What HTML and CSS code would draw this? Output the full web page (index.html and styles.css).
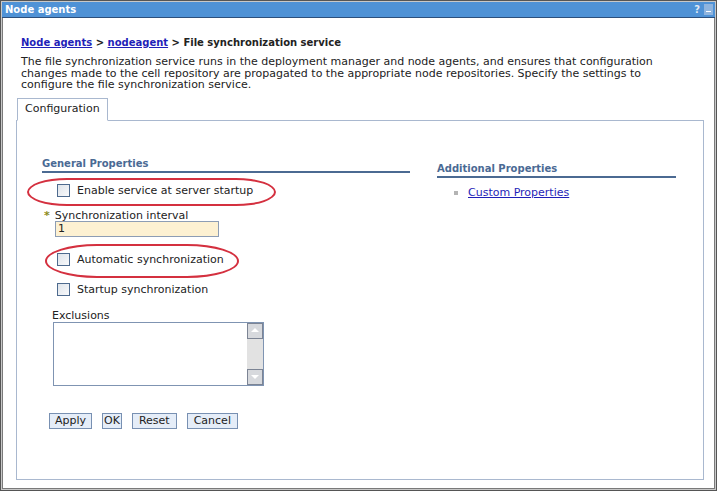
FILE: index.html
```html
<!DOCTYPE html>
<html lang="en">

<head>
    <meta charset="UTF-8">
    <title>Node agents</title>
    <link rel="stylesheet" href="styles.css">
</head>

<body>
    <div class="window">
        <div class="titlebar">
            <span class="title">Node agents</span>
            <span class="tb-icons"><span class="help">?</span><span class="minimize"></span></span>
        </div>
        <div class="page">
            <div class="crumbs"><a href="#">Node agents</a> &gt; <a href="#">nodeagent</a> &gt; File synchronization service</div>
            <p class="desc">The file synchronization service runs in the deployment manager and node agents, and ensures that configuration<br>changes made to the cell repository are propagated to the appropriate node repositories. Specify the settings to<br>configure the file synchronization service.</p>
            <div class="tabs"><span class="tab">Configuration</span></div>
            <div class="panel">
                <div class="cols">
                    <div class="col-left">
                        <h3 class="section">General Properties</h3>
                        <div class="check-row row-enable">
                            <span class="ring ring-enable"></span>
                            <span class="box"></span>
                            <span>Enable service at server startup</span>
                        </div>
                        <div class="field-label"><span class="req">*</span>Synchronization interval</div>
                        <div class="text-input">1</div>
                        <div class="check-row row-auto">
                            <span class="ring ring-auto"></span>
                            <span class="box"></span>
                            <span>Automatic synchronization</span>
                        </div>
                        <div class="check-row row-startup">
                            <span class="box"></span>
                            <span>Startup synchronization</span>
                        </div>
                        <div class="excl-label">Exclusions</div>
                        <div class="textarea">
                            <div class="scrollbar">
                                <span class="arrow up"></span>
                                <span class="arrow down"></span>
                            </div>
                        </div>
                    </div>
                    <div class="col-right">
                        <h3 class="section">Additional Properties</h3>
                        <ul class="links">
                            <li><a href="#">Custom Properties</a></li>
                        </ul>
                    </div>
                </div>
                <div class="buttons">
                    <button class="btn-apply">Apply</button>
                    <button class="btn-ok">OK</button>
                    <button>Reset</button>
                    <button>Cancel</button>
                </div>
            </div>
        </div>
    </div>
</body>

</html>
```

FILE: styles.css
```css
body {
    margin: 0;
    font-family: "DejaVu Sans", Verdana, sans-serif;
    font-size: 11px;
    color: #222;
    background: #fff;
}

.window {
    display: flex;
    flex-direction: column;
    width: 717px;
    height: 491px;
    box-sizing: border-box;
    padding: 0 2px 2px;
    border: 1px solid #555;
    box-shadow: inset 0 0 0 1px #c8c8c8, inset 0 0 0 2px #7a7a7a;
    overflow: hidden;
}

.titlebar {
    display: flex;
    align-items: center;
    justify-content: space-between;
    height: 15px;
    margin: 1px -1px 0;
    padding: 0 2px 0 3px;
    background: #4f92d6;
    border-bottom: 1px solid #2c4f7c;
}

.title {
    color: #fff;
    font-weight: bold;
    font-size: 10px;
}

.tb-icons {
    display: flex;
    align-items: center;
    gap: 4px;
}

.help {
    color: #dfe8f4;
    font-weight: bold;
    font-size: 10px;
}

.minimize {
    position: relative;
    width: 9px;
    height: 11px;
    background: #8fb4de;
}

.minimize::after {
    content: "";
    position: absolute;
    left: 2px;
    right: 2px;
    bottom: 3px;
    height: 1px;
    background: #fff;
}

.page {
    flex: 1;
    display: flex;
    flex-direction: column;
    padding: 18px 10px 8px 13px;
}

.crumbs {
    padding-left: 5px;
    font-size: 10px;
    font-weight: bold;
    line-height: 13px;
}

a {
    color: #1f1fb8;
}

.desc {
    margin: 7px 0 0;
    padding-left: 5px;
    line-height: 11.5px;
}

.tabs {
    display: flex;
    margin-top: 6px;
    padding-left: 1px;
}

.tab {
    position: relative;
    top: 1px;
    box-sizing: border-box;
    height: 23px;
    padding: 4px 7px 0 7px;
    line-height: 12px;
    border: 1px solid #a9b8cf;
    border-bottom: 1px solid #fff;
    background: #fff;
}

.panel {
    flex: 1;
    display: flex;
    flex-direction: column;
    border: 1px solid #a9b8cf;
    padding: 0 25px 0 25px;
}

.cols {
    display: grid;
    grid-template-columns: 368px 239px;
    column-gap: 27px;
    margin-top: 37px;
}

.section {
    margin: 0;
    padding-bottom: 1px;
    font-size: 10px;
    line-height: 12px;
    color: #4a6a94;
    border-bottom: 2px solid #4b6a92;
}

.col-left {
    display: flex;
    flex-direction: column;
}

.col-right {
    padding-top: 5px;
}

.check-row {
    position: relative;
    display: flex;
    align-items: center;
    gap: 7px;
    padding-left: 15px;
    height: 14px;
}

.box {
    width: 11px;
    height: 11px;
    border: 1px solid #4d6a8e;
    background: linear-gradient(135deg, #dfe4ea, #f8f9fb);
}

.row-enable {
    margin-top: 11px;
}

.row-auto {
    margin-top: 16px;
}

.row-startup {
    margin-top: 16px;
}

.ring {
    position: absolute;
    box-sizing: border-box;
    border: 2px solid #d4303f;
}

.ring-enable {
    left: -15px;
    top: -6px;
    width: 249px;
    height: 28px;
    border-radius: 40px / 14px;
}

.ring-auto {
    left: 3px;
    top: -9px;
    width: 194px;
    height: 34px;
    border-radius: 52px / 17px;
}

.field-label {
    margin-top: 12px;
    line-height: 12px;
}

.req {
    margin-right: 5px;
    margin-left: 2px;
    color: #8c8a1a;
    font-weight: bold;
}

.text-input {
    box-sizing: border-box;
    width: 164px;
    height: 16px;
    margin: -1px 0 0 13px;
    padding: 1px 2px;
    line-height: 12px;
    background: #fdf1d2;
    border: 1px solid #8d9db4;
}

.excl-label {
    margin: 13px 0 0 10px;
    line-height: 12px;
}

.textarea {
    display: flex;
    justify-content: flex-end;
    box-sizing: border-box;
    width: 211px;
    height: 64px;
    margin: 0 0 0 11px;
    border: 1px solid #7f94b2;
    background: #fff;
}

.scrollbar {
    display: flex;
    flex-direction: column;
    justify-content: space-between;
    width: 16px;
    background: #e2e2e2;
}

.arrow {
    position: relative;
    box-sizing: border-box;
    height: 16px;
    border: 1px solid #7c8494;
    background: #d7d9dd;
}

.arrow::after {
    content: "";
    position: absolute;
    left: 3px;
    border-left: 4px solid transparent;
    border-right: 4px solid transparent;
}

.arrow.up::after {
    top: 4px;
    border-bottom: 4px solid #fff;
}

.arrow.down::after {
    top: 5px;
    border-top: 4px solid #fff;
}

.links {
    margin: 9px 0 0;
    padding-left: 17px;
    list-style: none;
    line-height: 12px;
}

.links li {
    display: flex;
    align-items: center;
    gap: 10px;
}

.links li::before {
    content: "";
    width: 4px;
    height: 4px;
    background: #b4b4b4;
}

.buttons {
    display: flex;
    gap: 10px;
    margin: 27px 0 0 7px;
}

button {
    height: 16px;
    padding: 0 6px;
    font-family: "DejaVu Sans", Verdana, sans-serif;
    font-size: 11px;
    line-height: 13px;
    color: #222;
    background: #e5edf8;
    border: 1px solid #7890b2;
}

button.btn-apply {
    padding: 0 5px;
}

button.btn-ok {
    padding: 0 1px;
}
```
